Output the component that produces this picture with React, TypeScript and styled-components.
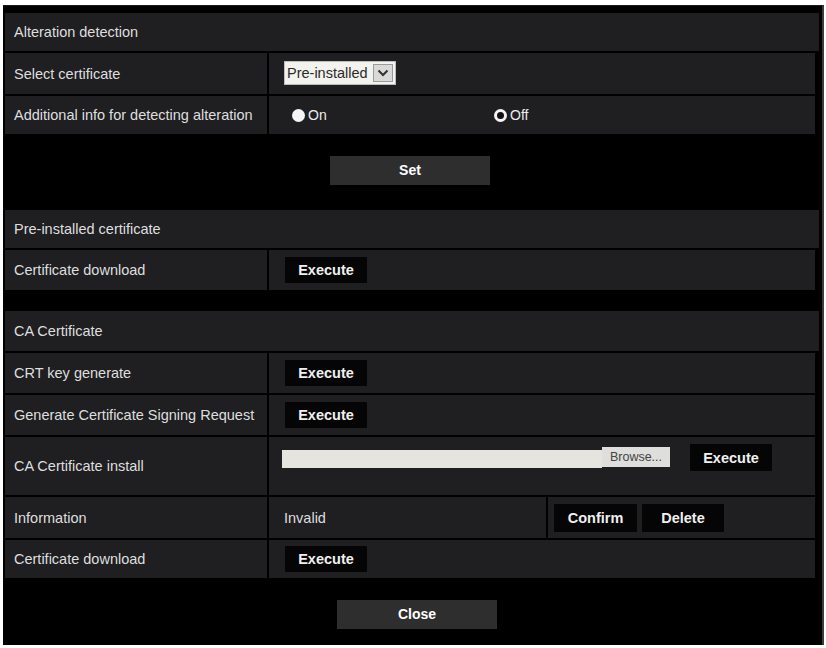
import styled, { createGlobalStyle } from "styled-components";

const GlobalStyle = createGlobalStyle`
  html, body {
    margin: 0;
    padding: 0;
    background: #ffffff;
  }
  * {
    box-sizing: border-box;
  }
`;

const App = () => {
  return (
    <Page>
      <GlobalStyle />
      <Panel>
        <SectionHeader>Alteration detection</SectionHeader>
        <Row $h={41}>
          <Label>Select certificate</Label>
          <Value>
            <SelectBox>
              <SelectText>Pre-installed</SelectText>
              <SelectArrow>
                <svg width="12" height="8" viewBox="0 0 12 8">
                  <path d="M1.5 1.5 L6 6 L10.5 1.5" fill="none" stroke="#333" strokeWidth="2" />
                </svg>
              </SelectArrow>
            </SelectBox>
          </Value>
        </Row>
        <Row $h={38}>
          <Label>Additional info for detecting alteration</Label>
          <Value>
            <RadioGroup>
              <RadioOption $width={202}>
                <RadioDot $checked={false} />
                On
              </RadioOption>
              <RadioOption>
                <RadioDot $checked />
                Off
              </RadioOption>
            </RadioGroup>
          </Value>
        </Row>
        <ActionBar $h={72} $shift={-2}>
          <WideButton $up={4}>Set</WideButton>
        </ActionBar>

        <SectionHeader>Pre-installed certificate</SectionHeader>
        <Row $h={40}>
          <Label>Certificate download</Label>
          <Value>
            <ExecButton>Execute</ExecButton>
          </Value>
        </Row>
        <ActionBar $h={17} />

        <SectionHeader $h={40}>CA Certificate</SectionHeader>
        <Row $h={40}>
          <Label>CRT key generate</Label>
          <Value>
            <ExecButton>Execute</ExecButton>
          </Value>
        </Row>
        <Row $h={40}>
          <Label>Generate Certificate Signing Request</Label>
          <Value>
            <ExecButton>Execute</ExecButton>
          </Value>
        </Row>
        <Row $h={58}>
          <Label>CA Certificate install</Label>
          <Value $top>
            <FileField />
            <BrowseButton>Browse...</BrowseButton>
            <ExecButton $ml={20} $h={27}>Execute</ExecButton>
          </Value>
        </Row>
        <Row $h={41} $split>
          <Label>Information</Label>
          <Value>Invalid</Value>
          <Value $pad={5}>
            <ExecButton $w={83} $h={28}>Confirm</ExecButton>
            <ExecButton $w={82} $h={28} $ml={5}>Delete</ExecButton>
          </Value>
        </Row>
        <Row $h={38}>
          <Label>Certificate download</Label>
          <Value>
            <ExecButton>Execute</ExecButton>
          </Value>
        </Row>
        <ActionBar $h={68} $shift={5}>
          <WideButton>Close</WideButton>
        </ActionBar>
      </Panel>
    </Page>
  );
};

const Page = styled.div`
  padding: 5px 2px 0 3px;
  width: 826px;
  height: 648px;
  background: #ffffff;
  font-family: "Liberation Sans", Arial, sans-serif;
`;

const Panel = styled.div`
  display: flex;
  flex-direction: column;
  gap: 2px;

  width: 821px;
  height: 640px;
  padding: 7px 3px 0 2px;

  background: #000000;
  border-right: 2px solid #3c3c3e;
  border-top: 1px solid #1a1a1a;
`;

const SectionHeader = styled.div<{ $h?: number }>`
  display: flex;
  align-items: center;
  flex-shrink: 0;

  height: ${(p) => p.$h ?? 38}px;
  padding-left: 9px;

  background: #1f1f22;
  color: #dedede;
  font-size: 14.5px;
`;

const Row = styled.div<{ $h: number; $split?: boolean }>`
  display: grid;
  grid-template-columns: ${(p) => (p.$split ? "262px 277px 1fr" : "262px 1fr")};
  column-gap: 2px;
  flex-shrink: 0;

  height: ${(p) => p.$h}px;
  margin-right: 4px;
`;

const Label = styled.div`
  display: flex;
  align-items: center;
  padding-left: 9px;

  background: #1f1f22;
  color: #dedede;
  font-size: 14.5px;
  white-space: nowrap;
`;

const Value = styled.div<{ $pad?: number; $top?: boolean }>`
  display: flex;
  align-items: ${(p) => (p.$top ? "flex-start" : "center")};
  padding-left: ${(p) => p.$pad ?? 15}px;
  padding-top: ${(p) => (p.$top ? 7 : 0)}px;

  background: #1f1f22;
  color: #dedede;
  font-size: 14.5px;
`;

const ActionBar = styled.div<{ $h: number; $shift?: number }>`
  display: flex;
  justify-content: center;
  align-items: center;
  flex-shrink: 0;

  height: ${(p) => p.$h}px;
  padding-left: ${(p) => Math.max(0, p.$shift ?? 0) * 2}px;
  padding-right: ${(p) => Math.max(0, -(p.$shift ?? 0)) * 2}px;
`;

const WideButton = styled.div<{ $up?: number }>`
  display: flex;
  justify-content: center;
  align-items: center;

  width: 160px;
  height: 29px;
  margin-bottom: ${(p) => p.$up ?? 0}px;

  background: #2e2e2f;
  color: #ffffff;
  font-size: 14px;
  font-weight: 700;
`;

const ExecButton = styled.div<{ $w?: number; $h?: number; $ml?: number }>`
  display: flex;
  justify-content: center;
  align-items: center;
  flex-shrink: 0;

  width: ${(p) => p.$w ?? 82}px;
  height: ${(p) => p.$h ?? 26}px;
  margin-left: ${(p) => p.$ml ?? 1}px;

  background: #050505;
  color: #f0f0f0;
  font-size: 14.5px;
  font-weight: 700;
`;

const SelectBox = styled.div`
  display: flex;
  align-items: center;

  width: 112px;
  height: 24px;
  margin-top: -2px;
  padding: 2px;

  background: #f2f2ee;
  border: 1px solid #bdbdbd;
`;

const SelectText = styled.span`
  flex: 1;
  overflow: hidden;
  white-space: nowrap;

  color: #2a2a2a;
  font-size: 14.5px;
`;

const SelectArrow = styled.span`
  display: flex;
  justify-content: center;
  align-items: center;
  flex-shrink: 0;

  width: 20px;
  height: 18px;
  margin-left: 1px;

  background: #d9d9d9;
  border: 1px solid #9a9a9a;
`;

const RadioGroup = styled.div`
  display: flex;
  align-items: center;
  padding-left: 8px;
`;

const RadioOption = styled.label<{ $width?: number }>`
  display: flex;
  align-items: center;
  gap: 3px;
  width: ${(p) => (p.$width ? `${p.$width}px` : "auto")};

  color: #ececec;
  font-size: 14px;
`;

const RadioDot = styled.span<{ $checked: boolean }>`
  display: inline-block;
  width: 13px;
  height: 13px;

  border-radius: 50%;
  background: ${(p) => (p.$checked ? "#111111" : "#f4f4f4")};
  border: ${(p) => (p.$checked ? "3px solid #f4f4f4" : "none")};
`;

const FileField = styled.div`
  width: 320px;
  height: 18px;
  margin-top: 6px;
  margin-left: -2px;

  background: #e6e4de;
`;

const BrowseButton = styled.div`
  display: flex;
  align-items: center;
  justify-content: center;

  width: 68px;
  height: 20px;
  margin-top: 3px;

  background: #dededc;
  color: #444444;
  font-size: 12.5px;
`;

export default App;
